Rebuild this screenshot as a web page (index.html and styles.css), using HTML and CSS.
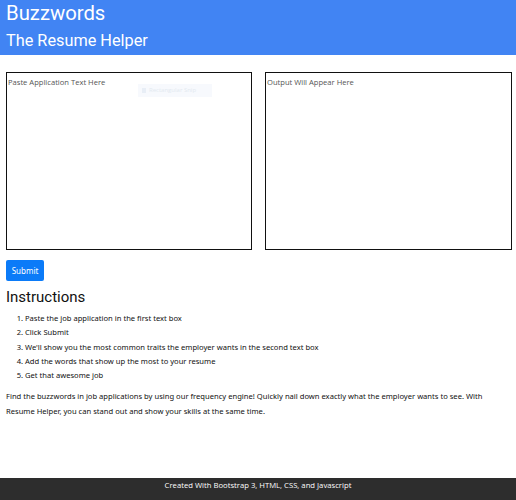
FILE: index.html
```html
<!DOCTYPE html>
<html>
<head>
<meta charset="utf-8">
<link rel="stylesheet" href="styles.css">
</head>
<body>
<header class="top">
  <h1 class="title">Buzzwords</h1>
  <h2 class="subtitle">The Resume Helper</h2>
</header>
<main class="content">
  <div class="boxes">
    <div class="box">
      <textarea class="area" placeholder="Paste Application Text Here"></textarea>
      <div class="snip"><span class="snip-ico"></span>Rectangular Snip</div>
    </div>
    <div class="box box-right">
      <textarea class="area" placeholder="Output Will Appear Here"></textarea>
    </div>
  </div>
  <button class="submit">Submit</button>
  <h3 class="heading">Instructions</h3>
  <ol class="steps">
    <li>Paste the job application in the first text box</li>
    <li>Click Submit</li>
    <li>We'll show you the most common traits the employer wants in the second text box</li>
    <li>Add the words that show up the most to your resume</li>
    <li>Get that awesome job</li>
  </ol>
  <p class="about">Find the buzzwords in job applications by using our frequency engine! Quickly nail down exactly what the employer wants to see. With Resume Helper, you can stand out and show your skills at the same time.</p>
</main>
<footer class="foot">Created With Bootstrap 3, HTML, CSS, and Javascript</footer>
</body>
</html>
```
FILE: styles.css
```css
html, body {
  margin: 0;
  padding: 0;
  height: 500px;
  overflow: hidden;
}
body {
  font-family: "Noto Sans", "Open Sans", sans-serif;
  color: #111;
  display: flex;
  flex-direction: column;
  background: #fff;
}
.top {
  background: #4184f3;
  color: #fff;
  height: 55px;
  padding: 0 6px;
  box-sizing: border-box;
  overflow: hidden;
}
.title {
  margin: 0;
  font-family: Roboto, sans-serif;
  font-weight: 400;
  font-size: 20.3px;
  line-height: 27px;
}
.subtitle {
  margin: 0;
  font-family: Roboto, sans-serif;
  font-weight: 400;
  font-size: 16.3px;
  line-height: 28px;
}
.content {
  flex: 1;
  padding: 17px 6px 0;
}
.boxes {
  display: flex;
  gap: 13px;
}
.box {
  position: relative;
}
.area {
  display: block;
  width: 246px;
  height: 178px;
  box-sizing: border-box;
  border: 1px solid #111;
  margin: 0;
  padding: 4px 1px;
  resize: none;
  font-family: "Open Sans", sans-serif;
  font-size: 7.6px;
}
.box-right .area {
  width: 247px;
}
.area::placeholder {
  color: #555;
}
.snip {
  position: absolute;
  left: 132px;
  top: 12px;
  width: 74px;
  height: 13px;
  background: #f7f9fd;
  color: #e3e9f0;
  font-family: "Open Sans", sans-serif;
  font-size: 6px;
  line-height: 13px;
  display: flex;
  align-items: center;
  gap: 3px;
  padding-left: 4px;
  box-sizing: border-box;
}
.snip-ico {
  width: 4px;
  height: 5px;
  background: #e8eef6;
}
.submit {
  margin-top: 10px;
  background: #0b7bf8;
  color: #fff;
  border: 0;
  border-radius: 2px;
  width: 38px;
  height: 21px;
  padding: 0;
  font-family: "Noto Sans", sans-serif;
  font-size: 8px;
}
.heading {
  margin: 7px 0 5px;
  font-family: Roboto, sans-serif;
  font-weight: 400;
  font-size: 15px;
  line-height: 18px;
}
.steps {
  margin: 0 0 7px;
  padding-left: 19px;
  font-size: 7.6px;
  line-height: 14.3px;
}
.about {
  margin: 0;
  font-size: 7.6px;
  line-height: 14.3px;
}
.foot {
  background: #2d2d2d;
  color: #fff;
  height: 22px;
  text-align: center;
  font-family: "Open Sans", sans-serif;
  font-size: 7.7px;
  line-height: 15px;
}
```
